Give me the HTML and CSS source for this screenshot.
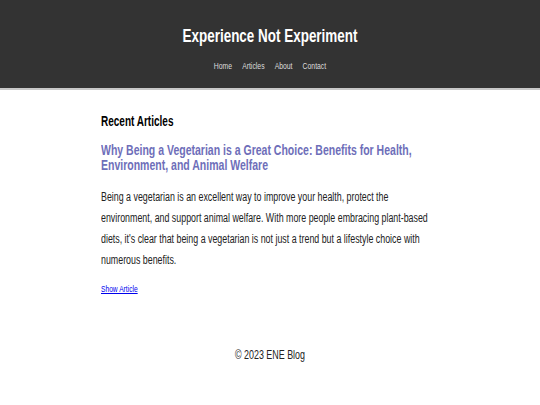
FILE: index.html
```html
<!DOCTYPE html>
<html lang="en">
<head>
<meta charset="utf-8">
<title>Experience Not Experiment</title>
<link rel="stylesheet" href="styles.css">
</head>
<body>
<header class="site-header">
  <div class="header-inner">
    <h1 class="site-title">Experience Not Experiment</h1>
    <nav class="site-nav">
      <a href="#">Home</a>
      <a href="#">Articles</a>
      <a href="#">About</a>
      <a href="#">Contact</a>
    </nav>
  </div>
</header>
<main class="content">
  <div class="content-inner">
    <h2 class="section-title">Recent Articles</h2>
    <article class="article">
      <h3 class="article-title">Why Being a Vegetarian is a Great Choice: Benefits for Health, Environment, and Animal Welfare</h3>
      <p class="article-excerpt">Being a vegetarian is an excellent way to improve your health, protect the environment, and support animal welfare. With more people embracing plant-based diets, it's clear that being a vegetarian is not just a trend but a lifestyle choice with numerous benefits.</p>
      <a class="article-link" href="#">Show Article</a>
    </article>
  </div>
</main>
<footer class="site-footer">
  <div class="footer-inner">© 2023 ENE Blog</div>
</footer>
</body>
</html>
```

FILE: styles.css
```css
html, body {
  margin: 0;
  padding: 0;
  background: #fff;
}

body {
  font-family: "Liberation Sans", Arial, Helvetica, sans-serif;
  color: #222;
}

/* the design uses a condensed sans; emulate it by narrowing the text */
.header-inner,
.content-inner,
.footer-inner {
  transform: scaleX(0.72);
}

.site-header {
  box-sizing: border-box;
  height: 90px;
  padding-top: 25px;
  background: #333;
  border-bottom: 2px solid #c8c8c8;
  text-align: center;
}

.header-inner {
  transform-origin: center top;
}

.site-title {
  margin: 0;
  font-size: 18.7px;
  line-height: 21px;
  font-weight: bold;
  color: #fff;
}

.site-nav {
  margin-top: 13.5px;
  display: flex;
  justify-content: center;
  gap: 14px;
  font-size: 9.5px;
  line-height: 11px;
}

.site-nav a {
  color: #ddd;
  text-decoration: none;
}

.content {
  width: 338px;
  margin: 0 auto;
}

.content-inner {
  width: 466px;
  transform-origin: left top;
}

.section-title {
  margin: 23.2px 0 0;
  font-size: 13.9px;
  line-height: 16px;
  font-weight: bold;
  color: #000;
}

.article-title {
  margin: 13.7px 0 0;
  font-size: 14.6px;
  line-height: 15px;
  font-weight: bold;
  color: #6e6eb9;
}

.article-excerpt {
  margin: 14.4px 0 0;
  font-size: 12.3px;
  line-height: 21px;
  color: #222;
}

.article-link {
  display: block;
  width: max-content;
  margin-top: 12.5px;
  font-size: 9.25px;
  line-height: 11px;
  color: #0000ee;
  text-decoration: underline;
}

.site-footer {
  margin-top: 53.4px;
  text-align: center;
}

.footer-inner {
  transform-origin: center top;
  font-size: 12.4px;
  line-height: 14px;
  color: #222;
}
```
